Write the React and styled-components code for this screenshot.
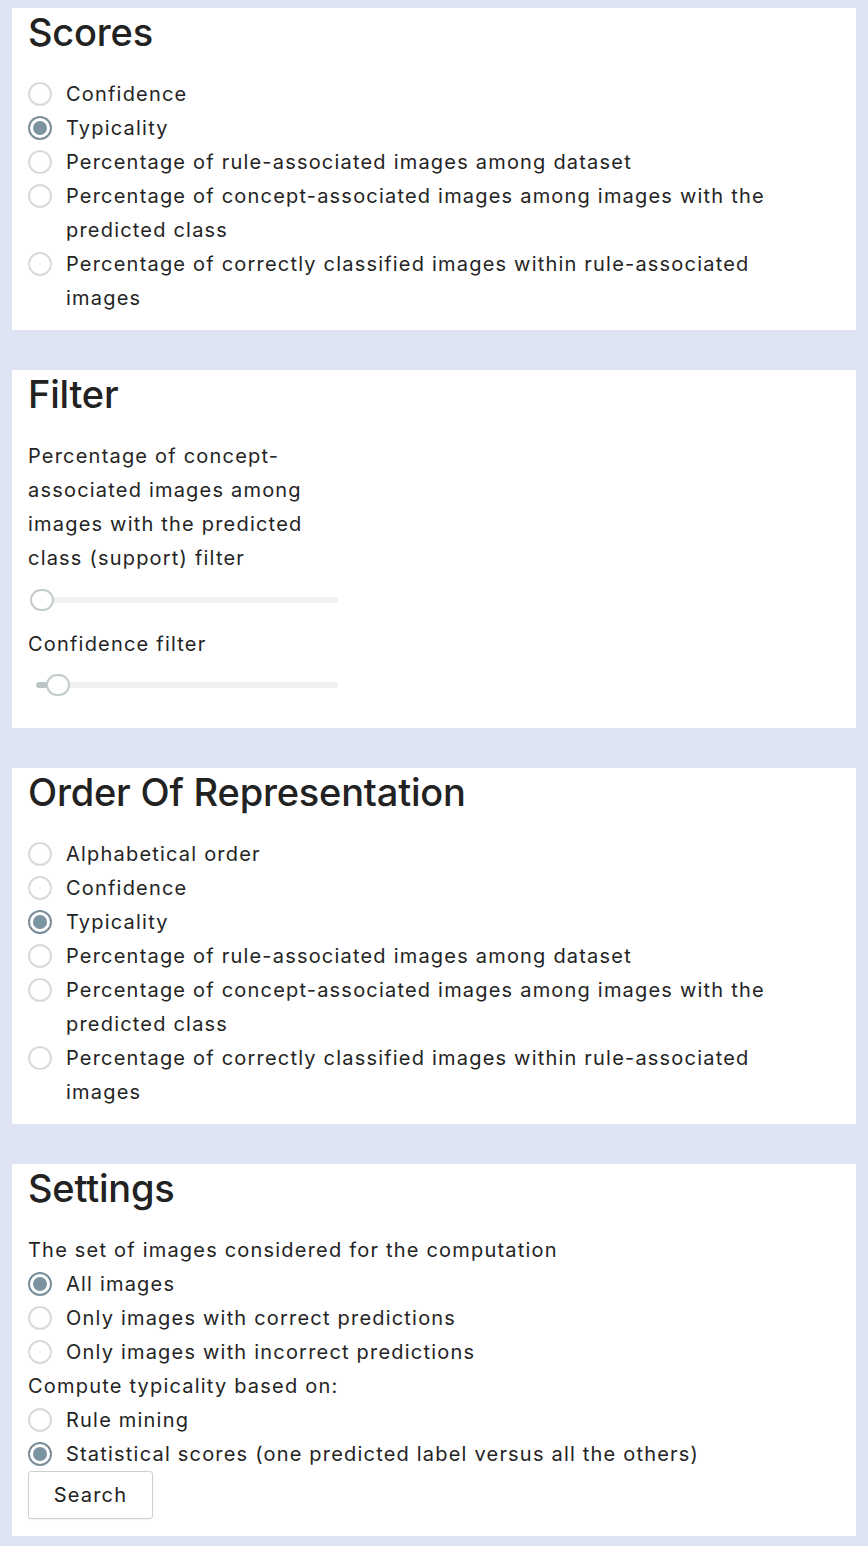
import React, { useState } from "react";
import styled, { createGlobalStyle } from "styled-components";

const Global = createGlobalStyle`
  html, body { margin: 0; padding: 0; background: #dfe4f4; }
  body { font-family: Inter, "Noto Sans", sans-serif; color: #242424; }
  * { box-sizing: border-box; }
`;

const Page = styled.div`
  display: flex;
  flex-direction: column;
  gap: 40px;
  padding: 8px 12px 10px 12px;
`;

const Panel = styled.section`
  background: #ffffff;
  padding: 0 32px ${(p) => p.$pb || 16}px 16px;
`;

const Heading = styled.h2`
  margin: 0 0 21px 0;
  font-size: 38px;
  line-height: 48px;
  font-weight: 500;
  color: #222;
  letter-spacing: -0.2px;
`;

const Options = styled.div`
  display: flex;
  flex-direction: column;
`;

const OptionRow = styled.label`
  display: flex;
  align-items: flex-start;
  gap: 14px;
  font-size: 20px;
  line-height: 34px;
  letter-spacing: 1.2px;
  cursor: pointer;
`;

const RadioCircle = styled.span`
  flex: none;
  width: 24px;
  height: 24px;
  margin-top: 5px;
  border-radius: 50%;
  border: 2px solid ${(p) => (p.$checked ? "#7a8e9a" : "#dadada")};
  display: flex;
  align-items: center;
  justify-content: center;
  &::after {
    content: "";
    width: 14px;
    height: 14px;
    border-radius: 50%;
    background: ${(p) => (p.$checked ? "#7c93a0" : "transparent")};
  }
`;

const OptionText = styled.span`
  flex: 1;
`;

const Text = styled.div`
  font-size: 20px;
  line-height: 34px;
  letter-spacing: 1.2px;
  max-width: ${(p) => p.$max || "none"};
  margin-top: ${(p) => p.$mt || 0}px;
`;

const SliderWrap = styled.div`
  position: relative;
  width: 310px;
  height: 22px;
  margin-top: ${(p) => p.$mt || 0}px;
`;

const Track = styled.div`
  position: absolute;
  left: 8px;
  right: 0;
  top: 8px;
  height: 6px;
  border-radius: 3px;
  background: #f1f1f1;
`;

const Fill = styled.div`
  position: absolute;
  left: 8px;
  top: 8px;
  height: 6px;
  border-radius: 3px 0 0 3px;
  background: #bcc4c5;
`;

const Thumb = styled.div`
  position: absolute;
  top: 0;
  width: 24px;
  height: 22px;
  border-radius: 11px;
  border: 2px solid #c3cbcb;
  background: #fff;
`;

const Button = styled.button`
  font-family: inherit;
  font-size: 20px;
  letter-spacing: 1.2px;
  color: #222;
  background: #fff;
  border: 1px solid #cfcfcf;
  border-radius: 3px;
  width: 125px;
  height: 48px;
  margin-top: 0;
  box-shadow: 0 1px 1px rgba(0,0,0,0.04);
`;

function RadioGroup({ options, value, onChange }) {
  return (
    <Options>
      {options.map((o) => (
        <OptionRow key={o} onClick={() => onChange(o)}>
          <RadioCircle $checked={value === o} />
          <OptionText>{o}</OptionText>
        </OptionRow>
      ))}
    </Options>
  );
}

function Slider({ pos, fill, mt }) {
  return (
    <SliderWrap $mt={mt}>
      <Track />
      {fill ? <Fill style={{ width: fill }} /> : null}
      <Thumb style={{ left: pos }} />
    </SliderWrap>
  );
}

const scoreOpts = [
  "Confidence",
  "Typicality",
  "Percentage of rule-associated images among dataset",
  "Percentage of concept-associated images among images with the predicted class",
  "Percentage of correctly classified images within rule-associated images",
];

export default function App() {
  const [score, setScore] = useState("Typicality");
  const [order, setOrder] = useState("Typicality");
  const [set, setSet] = useState("All images");
  const [typ, setTyp] = useState(
    "Statistical scores (one predicted label versus all the others)"
  );
  return (
    <>
      <Global />
      <Page>
        <Panel $pb={15}>
          <Heading>Scores</Heading>
          <RadioGroup options={scoreOpts} value={score} onChange={setScore} />
        </Panel>
        <Panel $pb={32}>
          <Heading>Filter</Heading>
          <Text $max="310px">
            Percentage of concept-associated images among images with the
            predicted class (support) filter
          </Text>
          <Slider pos={2} mt={14} />
          <Text $mt={16}>Confidence filter</Text>
          <Slider pos={18} fill={12} mt={13} />
        </Panel>
        <Panel $pb={15}>
          <Heading>Order Of Representation</Heading>
          <RadioGroup
            options={["Alphabetical order", ...scoreOpts]}
            value={order}
            onChange={setOrder}
          />
        </Panel>
        <Panel $pb={17}>
          <Heading>Settings</Heading>
          <Text>The set of images considered for the computation</Text>
          <RadioGroup
            options={[
              "All images",
              "Only images with correct predictions",
              "Only images with incorrect predictions",
            ]}
            value={set}
            onChange={setSet}
          />
          <Text>Compute typicality based on:</Text>
          <RadioGroup
            options={[
              "Rule mining",
              "Statistical scores (one predicted label versus all the others)",
            ]}
            value={typ}
            onChange={setTyp}
          />
          <Button>Search</Button>
        </Panel>
      </Page>
    </>
  );
}
